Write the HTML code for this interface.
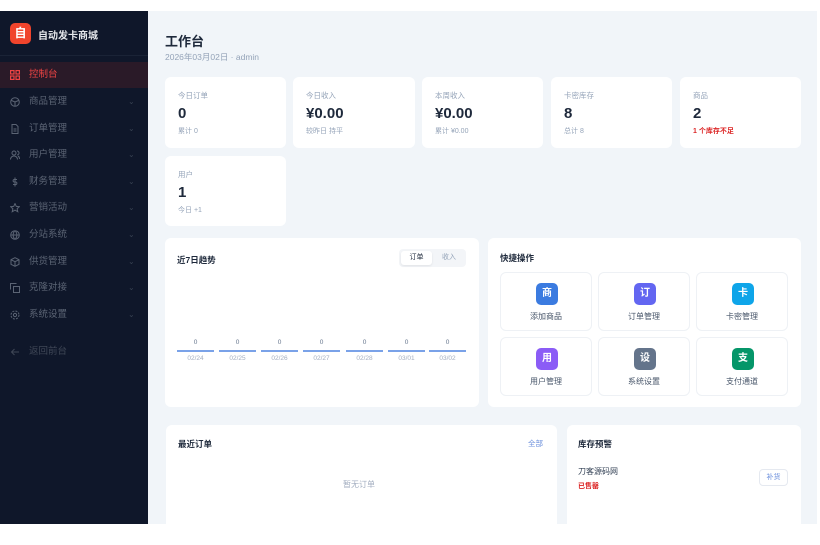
<!DOCTYPE html>
<html><head><meta charset="utf-8"><style>
*{margin:0;padding:0;box-sizing:border-box}
body{width:820px;height:524px;overflow:hidden;background:#fff;font-family:"Liberation Sans","Noto Sans CJK SC",sans-serif;position:relative}
.sb{position:absolute;left:0;top:11px;width:148px;height:513px;background:#0f172a}
.main{position:absolute;left:148px;top:11px;width:669px;height:513px;background:#f1f5f9}
.abs{position:absolute}
.logo{left:10px;top:12px;width:21px;height:21px;border-radius:5px;background:#f0442c;color:#fff;font-size:12px;font-weight:bold;text-align:center;line-height:21px}
.brand{left:38px;top:16px;color:#e5e7eb;font-size:10px;font-weight:bold}
.div{left:0;top:44px;width:148px;height:1px;background:#1a2336}
.it{position:absolute;left:0;width:148px;height:26px;color:#5b6474;font-size:9.5px;line-height:26px;padding-left:29px}
.it.act{background:#2a1a28;color:#ef4444}
.it svg{position:absolute;left:10px;top:8px}
.it .ch{position:absolute;left:128px;top:0;font-size:8px;color:#374151}
.card{position:absolute;background:#fff;border-radius:6px}
.lbl{position:absolute;left:13px;top:13px;font-size:7.5px;color:#94a3b8}
.val{position:absolute;left:13px;top:28px;font-size:15px;font-weight:bold;color:#1e293b}
.sub{position:absolute;left:13px;top:49px;font-size:7px;color:#94a3b8}
.h{position:absolute;font-size:8.5px;font-weight:bold;color:#1e293b}
.bar{position:absolute;top:350px;height:2px;width:37px;background:#7aa2e8}
.bz{position:absolute;font-size:6.5px;color:#64748b;width:37px;text-align:center}
.bd{position:absolute;font-size:6.5px;color:#a3aec0;width:37px;text-align:center}
.tile{position:absolute;width:92px;height:59px;border:1px solid #eef1f5;border-radius:6px;background:#fff}
.ic{position:absolute;left:35px;top:10px;width:22px;height:22px;border-radius:5px;color:#fff;font-size:10px;font-weight:bold;text-align:center;line-height:22px}
.tl{position:absolute;left:0;top:38px;width:90px;text-align:center;font-size:8px;color:#475569}
</style></head><body>
<div class="sb">
<div class="abs logo">自</div>
<div class="abs brand">自动发卡商城</div>
<div class="abs div"></div>
<div class="it act" style="top:51px"><svg width="10" height="10" viewBox="0 0 10 10" fill="none" stroke="#ef4444" stroke-width="1.2"><rect x="0.6" y="0.6" width="3.4" height="3.4"/><rect x="6" y="0.6" width="3.4" height="3.4"/><rect x="0.6" y="6" width="3.4" height="3.4"/><rect x="6" y="6" width="3.4" height="3.4"/></svg>控制台</div>
<div class="it" style="top:78px"><svg width="10" height="10" viewBox="0 0 10 10" fill="none" stroke="#5b6474"><circle cx="5" cy="5" r="4.3"/><path d="M1.5 3.5L5 5l3.5-1.5M5 5v4"/></svg>商品管理<span class="ch">⌄</span></div>
<div class="it" style="top:105px"><svg width="10" height="10" viewBox="0 0 10 10" fill="none" stroke="#5b6474"><path d="M2 .5h4l2 2v7H2z M3.5 5h3M3.5 7h3"/></svg>订单管理<span class="ch">⌄</span></div>
<div class="it" style="top:131px"><svg width="10" height="10" viewBox="0 0 10 10" fill="none" stroke="#5b6474"><circle cx="4" cy="3" r="2"/><path d="M0.5 9.5c0-2 1.5-3.5 3.5-3.5s3.5 1.5 3.5 3.5M7 1a2 2 0 010 4M9.5 9c0-1.5-.5-2.5-1.5-3"/></svg>用户管理<span class="ch">⌄</span></div>
<div class="it" style="top:158px"><svg width="10" height="10" viewBox="0 0 10 10" fill="none" stroke="#5b6474"><path d="M5 .5v9M7 2.5H4a1.3 1.3 0 000 2.5h2a1.3 1.3 0 010 2.5H3"/></svg>财务管理<span class="ch">⌄</span></div>
<div class="it" style="top:184px"><svg width="10" height="10" viewBox="0 0 10 10" fill="none" stroke="#5b6474"><path d="M5 .6l1.3 2.8 3 .3-2.2 2 .7 3-2.8-1.6-2.8 1.6.7-3-2.2-2 3-.3z"/></svg>营销活动<span class="ch">⌄</span></div>
<div class="it" style="top:211px"><svg width="10" height="10" viewBox="0 0 10 10" fill="none" stroke="#5b6474"><circle cx="5" cy="5" r="4.3"/><path d="M.7 5h8.6M5 .7c-2.5 2.5-2.5 6 0 8.6M5 .7c2.5 2.5 2.5 6 0 8.6"/></svg>分站系统<span class="ch">⌄</span></div>
<div class="it" style="top:238px"><svg width="10" height="10" viewBox="0 0 10 10" fill="none" stroke="#5b6474"><path d="M5 .7l4 2v4.6l-4 2-4-2V2.7zM1 2.7l4 2 4-2M5 4.7v4.6"/></svg>供货管理<span class="ch">⌄</span></div>
<div class="it" style="top:264px"><svg width="10" height="10" viewBox="0 0 10 10" fill="none" stroke="#5b6474"><rect x="3.5" y="3.5" width="6" height="6"/><path d="M6.5 .5H.5v6"/></svg>克隆对接<span class="ch">⌄</span></div>
<div class="it" style="top:291px"><svg width="10" height="10" viewBox="0 0 10 10" fill="none" stroke="#5b6474"><circle cx="5" cy="5" r="1.6"/><circle cx="5" cy="5" r="4" stroke-dasharray="2 1.2"/></svg>系统设置<span class="ch">⌄</span></div>
<div class="it" style="top:328px;color:#3f4756"><svg width="10" height="10" viewBox="0 0 10 10" fill="none" stroke="#3f4756"><path d="M9 5H1.5M4.5 2L1.5 5l3 3"/></svg>返回前台</div>
</div>
<div class="main">
<div class="abs" style="left:17px;top:20px;font-size:13px;font-weight:bold;color:#1e293b">工作台</div>
<div class="abs" style="left:17px;top:40px;font-size:8.5px;color:#94a3b8">2026年03月02日 · admin</div>
<div class="card" style="left:17px;top:66px;width:121px;height:71px"><div class="lbl">今日订单</div><div class="val">0</div><div class="sub">累计 0</div></div>
<div class="card" style="left:145px;top:66px;width:122px;height:71px"><div class="lbl">今日收入</div><div class="val">¥0.00</div><div class="sub">较昨日 持平</div></div>
<div class="card" style="left:274px;top:66px;width:121px;height:71px"><div class="lbl">本周收入</div><div class="val">¥0.00</div><div class="sub">累计 ¥0.00</div></div>
<div class="card" style="left:403px;top:66px;width:121px;height:71px"><div class="lbl">卡密库存</div><div class="val">8</div><div class="sub">总计 8</div></div>
<div class="card" style="left:532px;top:66px;width:121px;height:71px"><div class="lbl">商品</div><div class="val">2</div><div class="sub" style="color:#dc2626;font-weight:bold">1 个库存不足</div></div>
<div class="card" style="left:17px;top:145px;width:121px;height:70px"><div class="lbl">用户</div><div class="val">1</div><div class="sub">今日 +1</div></div>
<div class="card" style="left:17px;top:227px;width:314px;height:169px"></div>
<div class="card" style="left:340px;top:227px;width:313px;height:169px"></div>
<div class="card" style="left:18px;top:414px;width:391px;height:120px"></div>
<div class="card" style="left:419px;top:414px;width:234px;height:120px"></div>
</div>
<div class="h" style="left:177px;top:254px">近7日趋势</div>
<div class="abs" style="left:399px;top:249px;width:67px;height:18px;background:#f3f5f8;border-radius:4px"></div>
<div class="abs" style="left:401px;top:251px;width:31px;height:14px;background:#fff;border-radius:3px;font-size:7px;color:#1e293b;text-align:center;line-height:14px;box-shadow:0 1px 2px rgba(0,0,0,.08)">订单</div>
<div class="abs" style="left:434px;top:251px;width:30px;height:14px;font-size:7px;color:#94a3b8;text-align:center;line-height:14px">收入</div>
<div class="bar" style="left:177px"></div><div class="bar" style="left:219px"></div><div class="bar" style="left:261px"></div><div class="bar" style="left:303px"></div><div class="bar" style="left:346px"></div><div class="bar" style="left:388px"></div><div class="bar" style="left:429px"></div>
<div class="bz" style="left:177px;top:339px">0</div><div class="bz" style="left:219px;top:339px">0</div><div class="bz" style="left:261px;top:339px">0</div><div class="bz" style="left:303px;top:339px">0</div><div class="bz" style="left:346px;top:339px">0</div><div class="bz" style="left:388px;top:339px">0</div><div class="bz" style="left:429px;top:339px">0</div>
<div class="bd" style="left:177px;top:355px">02/24</div><div class="bd" style="left:219px;top:355px">02/25</div><div class="bd" style="left:261px;top:355px">02/26</div><div class="bd" style="left:303px;top:355px">02/27</div><div class="bd" style="left:346px;top:355px">02/28</div><div class="bd" style="left:388px;top:355px">03/01</div><div class="bd" style="left:429px;top:355px">03/02</div>
<div class="h" style="left:500px;top:252px">快捷操作</div>
<div class="tile" style="left:500px;top:272px"><div class="ic" style="background:#3b7be0">商</div><div class="tl">添加商品</div></div>
<div class="tile" style="left:598px;top:272px"><div class="ic" style="background:#6366f1">订</div><div class="tl">订单管理</div></div>
<div class="tile" style="left:696px;top:272px"><div class="ic" style="background:#0ea5e9">卡</div><div class="tl">卡密管理</div></div>
<div class="tile" style="left:500px;top:337px"><div class="ic" style="background:#8b5cf6">用</div><div class="tl">用户管理</div></div>
<div class="tile" style="left:598px;top:337px"><div class="ic" style="background:#64748b">设</div><div class="tl">系统设置</div></div>
<div class="tile" style="left:696px;top:337px"><div class="ic" style="background:#059669">支</div><div class="tl">支付通道</div></div>
<div class="h" style="left:178px;top:438px">最近订单</div>
<div class="abs" style="left:528px;top:438px;font-size:7.5px;color:#6b8fdc">全部</div>
<div class="abs" style="left:343px;top:479px;font-size:8px;color:#a3aec0">暂无订单</div>
<div class="h" style="left:578px;top:438px">库存预警</div>
<div class="abs" style="left:578px;top:466px;font-size:8px;color:#334155">刀客源码网</div>
<div class="abs" style="left:578px;top:481px;font-size:7px;color:#dc2626;font-weight:bold">已售罄</div>
<div class="abs" style="left:759px;top:469px;width:29px;height:17px;border:1px solid #e5e9f0;border-radius:4px;font-size:7px;color:#6b8fdc;text-align:center;line-height:15px">补货</div>
</body></html>
